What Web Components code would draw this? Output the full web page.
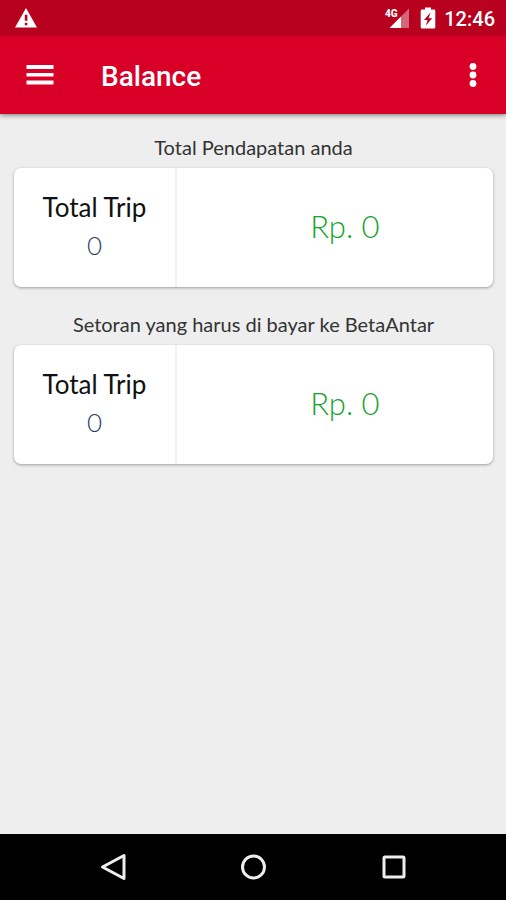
<!DOCTYPE html>
<html lang="id">
<head>
<meta charset="utf-8">
<meta name="viewport" content="width=device-width, initial-scale=1">
<title>Balance</title>
<style>
html, body { margin: 0; height: 100%; }
body { font-family: Lato, "Open Sans", sans-serif; background: #eeeeee; color: #212121; }
</style>
</head>
<body>
<balance-app></balance-app>
<script>
class BaseElement extends HTMLElement {
  constructor() {
    super();
    this.attachShadow({ mode: "open" }).innerHTML = this.constructor.markup;
  }
}

class StatusBar extends BaseElement {
  static markup = `
    <style>
      :host { display: flex; align-items: center; justify-content: space-between; height: 36px; padding: 0 11px 0 14px; box-sizing: border-box; position: relative; z-index: 2; background: #b8001f; color: #fff; font: 500 20px/36px Roboto, sans-serif; }
      .right { display: flex; align-items: center; }
      svg { display: block; fill: #fff; }
      .signal { margin-right: 10px; }
      .battery { margin-right: 8px; }
      time { padding-top: 2px; }
    </style>
    <svg width="24" height="24" viewBox="0 0 24 24" aria-label="Peringatan"><path fill-rule="evenodd" d="M12 2 1 21.500h22zM10.800 8.800h2.600v6h-2.600zm0 8h2.600v2.400h-2.600z"/></svg>
    <div class="right">
      <svg class="signal" width="26" height="24" viewBox="0 0 26 24">
        <path d="M25 2.500v19.500h-8V10.500z" opacity=".4"/><path d="M17 10.500v11.500H5.500z"/>
        <text x="1" y="11" font-family="Roboto, sans-serif" font-size="10" font-weight="900">4G</text>
      </svg>
      <svg class="battery" width="16" height="24" viewBox="0 0 16 24"><path fill-rule="evenodd" d="M5 1.500h6v2h3q1.300 0 1.300 1.300v16.400q0 1.300-1.300 1.300H2Q.7 22.500.7 21.200V4.800Q.7 3.500 2 3.500h3zM10.500 6.500 4 14h3.600L5.800 19.500l6.500-7.300H8.600z"/></svg>
      <time>12:46</time>
    </div>`;
}

class AppBar extends BaseElement {
  static markup = `
    <style>
      :host { display: flex; align-items: center; height: 78px; padding: 0 13px 0 20px; box-sizing: border-box; background: #d80027; color: #fff; box-shadow: 0 1px 5px rgba(0,0,0,.5); position: relative; z-index: 1; }
      h1 { flex: 1; margin: 0 0 0 41px; font: 500 28px/32px Roboto, sans-serif; padding-top: 3px; }
      button { display: grid; place-items: center; width: 40px; height: 40px; padding: 0; border: 0; background: none; }
      svg { display: block; fill: #fff; }
    </style>
    <button type="button" aria-label="Menu"><svg width="28" height="20" viewBox="0 0 28 20"><path d="M.5 0h27v4H.5zm0 8h27v3.500H.5zm0 7.500h27v4H.5z"/></svg></button>
    <h1><slot></slot></h1>
    <button type="button" aria-label="Opsi lainnya"><svg width="8" height="24" viewBox="0 0 8 24"><circle cx="4" cy="3.500" r="3.400"/><circle cx="4" cy="12" r="3.400"/><circle cx="4" cy="20.500" r="3.400"/></svg></button>`;
}

class BalanceSection extends BaseElement {
  static markup = `
    <style>
      :host { display: block; }
      h2 { margin: 0 0 9px; font-weight: 400; font-size: 20px; line-height: 24px; text-align: center; color: #333; }
      .card { display: grid; grid-template-columns: 34fr 66fr; min-height: 119px; background: #fff; border-radius: 7px; box-shadow: 0 1px 3px rgba(0,0,0,.35); text-align: center; }
      .trip { display: flex; flex-direction: column; justify-content: center; border-right: 2px solid #f0f0f0; padding-bottom: 4px; line-height: 38px; }
      .label { font-size: 26px; color: #111; }
      .count { font-size: 26px; font-weight: 300; color: #2c3e60; }
      .amount { display: grid; place-items: center; padding: 0 0 4px 20px; font-size: 31px; font-weight: 300; line-height: 36px; color: #18a32a; }
    </style>
    <h2><slot name="title"></slot></h2>
    <div class="card">
      <div class="trip"><span class="label">Total Trip</span><span class="count"><slot name="trips"></slot></span></div>
      <div class="amount"><span><slot name="amount"></slot></span></div>
    </div>`;
}

class NavBar extends BaseElement {
  static markup = `
    <style>
      :host { display: flex; align-items: center; justify-content: center; height: 66px; background: #000; }
      button { display: grid; place-items: center; width: 140px; height: 48px; padding: 0; border: 0; background: none; }
      svg { display: block; fill: none; stroke: #eee; stroke-width: 3; stroke-linejoin: round; }
    </style>
    <button type="button" aria-label="Kembali"><svg width="28" height="28" viewBox="0 0 28 28"><path d="M25 2.500v23L3.500 14z"/></svg></button>
    <button type="button" aria-label="Beranda"><svg width="28" height="28" viewBox="0 0 28 28"><circle cx="14.500" cy="14" r="11"/></svg></button>
    <button type="button" aria-label="Terbaru"><svg width="28" height="28" viewBox="0 0 28 28"><rect x="5" y="4" width="20" height="20" rx="1"/></svg></button>`;
}

class BalanceApp extends BaseElement {
  static markup = `
    <style>
      :host { display: flex; flex-direction: column; min-height: 100vh; }
      main { flex: 1; display: flex; flex-direction: column; gap: 25px; padding: 21px 13px 24px 14px; }
    </style>
    <status-bar></status-bar>
    <app-bar>Balance</app-bar>
    <main>
      <balance-section><span slot="title">Total Pendapatan anda</span><span slot="trips">0</span><span slot="amount">Rp. 0</span></balance-section>
      <balance-section><span slot="title">Setoran yang harus di bayar ke BetaAntar</span><span slot="trips">0</span><span slot="amount">Rp. 0</span></balance-section>
    </main>
    <nav-bar></nav-bar>`;
}

customElements.define("status-bar", StatusBar);
customElements.define("app-bar", AppBar);
customElements.define("balance-section", BalanceSection);
customElements.define("nav-bar", NavBar);
customElements.define("balance-app", BalanceApp);
</script>
</body>
</html>
